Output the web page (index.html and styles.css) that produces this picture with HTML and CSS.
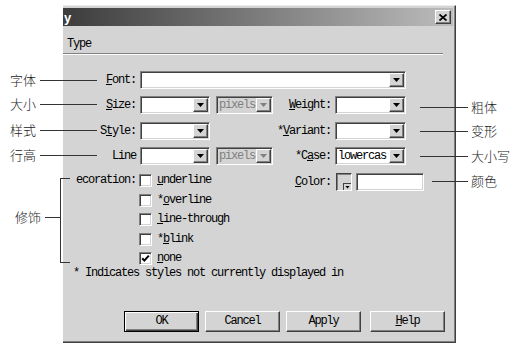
FILE: index.html
```html
<!DOCTYPE html>
<html>
<head>
    <title>Style Definition - Type</title>
    <link rel="stylesheet" href="styles.css">
</head>
<body>
    <div class="figure">
        <div class="dialog">
            <div class="titlebar">
                <span class="title">y</span>
                <span class="close-btn">
                    <svg width="8" height="7" viewBox="0 0 8 7"><path d="M0.5 0.5L7.5 6.5M7.5 0.5L0.5 6.5" stroke="#000" stroke-width="1.7" fill="none"/></svg>
                </span>
            </div>
            <div class="tab-head">Type</div>
            <div class="tab-rule"></div>

            <div class="fields">
                <div class="row">
                    <span class="lbl"><u>F</u>ont:</span>
                    <div class="combo combo-font"><span class="value"></span><span class="arrow"></span></div>
                </div>
                <div class="row row-tall">
                    <span class="lbl"><u>S</u>ize:</span>
                    <div class="combo combo-small"><span class="value"></span><span class="arrow"></span></div>
                    <div class="combo combo-unit disabled"><span class="value">pixels</span><span class="arrow"></span></div>
                    <span class="lbl2"><u>W</u>eight:</span>
                    <div class="combo combo-right"><span class="value"></span><span class="arrow"></span></div>
                </div>
                <div class="row">
                    <span class="lbl">S<u>t</u>yle:</span>
                    <div class="combo combo-small"><span class="value"></span><span class="arrow"></span></div>
                    <div class="unit-space"></div>
                    <span class="lbl2">*<u>V</u>ariant:</span>
                    <div class="combo combo-right"><span class="value"></span><span class="arrow"></span></div>
                </div>
                <div class="row row-tall">
                    <span class="lbl">Line</span>
                    <div class="combo combo-small"><span class="value"></span><span class="arrow"></span></div>
                    <div class="combo combo-unit disabled"><span class="value">pixels</span><span class="arrow"></span></div>
                    <span class="lbl2">*C<u>a</u>se:</span>
                    <div class="combo combo-right"><span class="value">lowercas</span><span class="arrow"></span></div>
                </div>
            </div>

            <div class="lower">
                <div class="deco">
                    <span class="deco-lbl">ecoration:</span>
                    <div class="checks">
                        <div class="check"><span class="box"></span><span><u>u</u>nderline</span></div>
                        <div class="check"><span class="box"></span><span>*<u>o</u>verline</span></div>
                        <div class="check"><span class="box"></span><span><u>l</u>ine-through</span></div>
                        <div class="check"><span class="box"></span><span>*<u>b</u>link</span></div>
                        <div class="check">
                            <span class="box">
                                <svg width="9" height="9" viewBox="0 0 9 9"><path d="M1.2 4.2L3.4 6.6L7.8 1.6" stroke="#000" stroke-width="2" fill="none"/></svg>
                            </span>
                            <span><u>n</u>one</span>
                        </div>
                    </div>
                </div>
                <div class="color-row">
                    <span class="lbl2"><u>C</u>olor:</span>
                    <span class="swatch"><span class="swatch-arrow"></span></span>
                    <span class="text-box"></span>
                </div>
            </div>

            <div class="footnote">* Indicates styles not currently displayed in</div>

            <div class="buttons">
                <div class="btn btn-default">OK</div>
                <div class="btn">Cancel</div>
                <div class="btn">Apply</div>
                <div class="btn btn-help"><u>H</u>elp</div>
            </div>
        </div>

        <!-- callout labels -->
        <div class="note note-left note-font"><span>字体</span><span class="note-line"></span></div>
        <div class="note note-left note-size"><span>大小</span><span class="note-line"></span></div>
        <div class="note note-left note-style"><span>样式</span><span class="note-line"></span></div>
        <div class="note note-left note-height"><span>行高</span><span class="note-line"></span></div>
        <div class="note note-deco"><span>修饰</span><span class="note-line"></span></div>
        <div class="bracket"></div>

        <div class="note note-right note-weight"><span class="note-line"></span><span>粗体</span></div>
        <div class="note note-right note-variant"><span class="note-line"></span><span>变形</span></div>
        <div class="note note-right note-case"><span class="note-line"></span><span>大小写</span></div>
        <div class="note note-right note-color"><span class="note-line"></span><span>颜色</span></div>
    </div>
</body>
</html>
```

FILE: styles.css
```css
body {
    margin: 0;
    background: #fff;
    font-family: "Liberation Mono", monospace;
    font-size: 12px;
    letter-spacing: -1.2px;
    color: #000;
}

u {
    text-decoration: underline;
    text-underline-offset: 1px;
}

.figure {
    position: relative;
    box-sizing: border-box;
    width: 521px;
    height: 351px;
    padding: 5px 0 0 63px;
    overflow: hidden;
}

.dialog {
    box-sizing: border-box;
    width: 393px;
    height: 338px;
    padding: 2px 2px 0 0;
    background: #d4d4d4;
    border-top: 1px solid #ececec;
    border-right: 1px solid #404040;
    border-bottom: 1px solid #404040;
    box-shadow: inset -1px -1px #808080;
}

.titlebar {
    display: flex;
    align-items: center;
    justify-content: space-between;
    height: 18px;
    background: linear-gradient(to right, #3c3c3c, #bcbcbc);
    color: #fff;
    font: bold 13px "Liberation Sans", Arial, sans-serif;
    letter-spacing: 0;
}

.title {
    padding-left: 1px;
}

.close-btn {
    box-sizing: border-box;
    display: flex;
    align-items: center;
    justify-content: center;
    width: 16px;
    height: 14px;
    margin-right: 2px;
    background: #d4d4d4;
    border: 1px solid;
    border-color: #fff #404040 #404040 #fff;
    box-shadow: inset -1px -1px #808080;
}

.tab-head {
    margin-top: 12px;
    padding-left: 4px;
    line-height: 12px;
}

.tab-rule {
    margin: 3px 10px 0 0;
    border-top: 1px solid #808080;
    border-bottom: 1px solid #fff;
}

.fields {
    display: flex;
    flex-direction: column;
    gap: 7px;
    margin-top: 16px;
}

.row {
    display: flex;
    align-items: flex-start;
    height: 18px;
}

.row-tall {
    height: 19px;
}

.lbl {
    width: 73px;
    margin-right: 4px;
    text-align: right;
    line-height: 18px;
    white-space: nowrap;
}

.lbl2 {
    width: 58px;
    margin-right: 4px;
    text-align: right;
    line-height: 18px;
    white-space: nowrap;
}

.combo {
    box-sizing: border-box;
    display: flex;
    height: 18px;
    padding: 1px;
    background: #fff;
    border: 1px solid;
    border-color: #808080 #fff #fff #808080;
    box-shadow: inset 1px 1px #404040, inset -1px -1px #d4d4d4;
}

.combo-font { width: 266px; }
.combo-small { width: 70px; margin-right: 6px; }
.combo-unit { width: 57px; }
.combo-right { width: 71px; }

.unit-space {
    width: 57px;
}

.value {
    flex: 1;
    overflow: hidden;
    padding-left: 1px;
    line-height: 14px;
    white-space: nowrap;
}

.arrow {
    box-sizing: border-box;
    display: flex;
    align-items: center;
    justify-content: center;
    width: 15px;
    height: 14px;
    background: #d4d4d4;
    border: 1px solid;
    border-color: #fff #404040 #404040 #fff;
    box-shadow: inset -1px -1px #808080;
}

.arrow::after {
    content: "";
    width: 7px;
    height: 4px;
    background: #000;
    clip-path: polygon(0 0, 100% 0, 50% 100%);
}

.disabled {
    background: #d4d4d4;
    color: #808080;
}

.disabled .arrow::after {
    background: #808080;
}

.lower {
    display: flex;
    margin-top: 5px;
}

.deco {
    display: flex;
    width: 210px;
}

.deco-lbl {
    width: 73px;
    margin-right: 3px;
    padding-top: 3px;
    text-align: right;
    line-height: 13px;
    white-space: nowrap;
}

.checks {
    display: flex;
    flex-direction: column;
    gap: 6.5px;
    padding-top: 3px;
}

.check {
    display: flex;
    align-items: center;
    gap: 5px;
    height: 13px;
    line-height: 13px;
    white-space: nowrap;
}

.box {
    box-sizing: border-box;
    display: flex;
    align-items: center;
    justify-content: center;
    width: 13px;
    height: 13px;
    background: #fff;
    border: 1px solid;
    border-color: #808080 #fff #fff #808080;
    box-shadow: inset 1px 1px #404040, inset -1px -1px #d4d4d4;
}

.color-row {
    display: flex;
    align-items: flex-start;
    height: 18px;
    margin-top: 2px;
}

.swatch {
    box-sizing: border-box;
    display: flex;
    align-items: flex-end;
    justify-content: flex-end;
    width: 16px;
    height: 18px;
    margin-left: 1px;
    margin-right: 4px;
    background: #d4d4d4;
    border: 1px solid;
    border-color: #404040 #fff #fff #404040;
    box-shadow: inset 1px 1px #808080;
}

.swatch-arrow {
    box-sizing: border-box;
    display: flex;
    align-items: center;
    justify-content: center;
    width: 8px;
    height: 7px;
    border-left: 1px solid #404040;
    border-top: 1px solid #404040;
}

.swatch-arrow::after {
    content: "";
    width: 5px;
    height: 3px;
    background: #000;
    clip-path: polygon(0 0, 100% 0, 50% 100%);
}

.text-box {
    box-sizing: border-box;
    width: 68px;
    height: 18px;
    background: #fff;
    border: 1px solid;
    border-color: #808080 #fff #fff #808080;
    box-shadow: inset 1px 1px #404040, inset -1px -1px #d4d4d4;
}

.footnote {
    margin-top: 2px;
    padding-left: 10px;
    line-height: 12px;
    white-space: nowrap;
}

.buttons {
    display: flex;
    gap: 6px;
    margin-top: 32px;
    padding-left: 61px;
}

.btn {
    box-sizing: border-box;
    width: 75px;
    height: 21px;
    background: #d4d4d4;
    border: 1px solid;
    border-color: #fff #404040 #404040 #fff;
    box-shadow: inset -1px -1px #808080;
    line-height: 19px;
    text-align: center;
}

.btn-default {
    border-color: #000;
    box-shadow: inset 1px 1px #fff, inset -1px -1px #404040, inset -2px -2px #808080;
}

.btn-help {
    margin-left: 3px;
}

/* callouts drawn over the screenshot */
.note {
    position: absolute;
    display: flex;
    align-items: center;
    gap: 4px;
    height: 14px;
    font: 300 13px "Noto Sans CJK SC", sans-serif;
    line-height: 14px;
    letter-spacing: 0;
    color: #222;
}

.note-line {
    border-top: 1px solid #333;
}

.note-left { left: 10px; }
.note-left .note-line { width: 57px; }

.note-font { top: 73px; }
.note-size { top: 97px; }
.note-style { top: 123px; }
.note-height { top: 148px; }

.note-deco {
    left: 15px;
    top: 210px;
}

.note-deco .note-line { width: 15px; }

.bracket {
    position: absolute;
    left: 60px;
    top: 178px;
    box-sizing: border-box;
    width: 10px;
    height: 85px;
    border: 1px solid #333;
    border-right: none;
}

.note-right {
    left: 420px;
    gap: 3px;
}

.note-right .note-line { width: 48px; }

.note-weight { top: 100px; }
.note-variant { top: 124px; }
.note-case { top: 149px; }

.note-color {
    left: 432px;
    top: 174px;
}

.note-color .note-line { width: 36px; }
```
